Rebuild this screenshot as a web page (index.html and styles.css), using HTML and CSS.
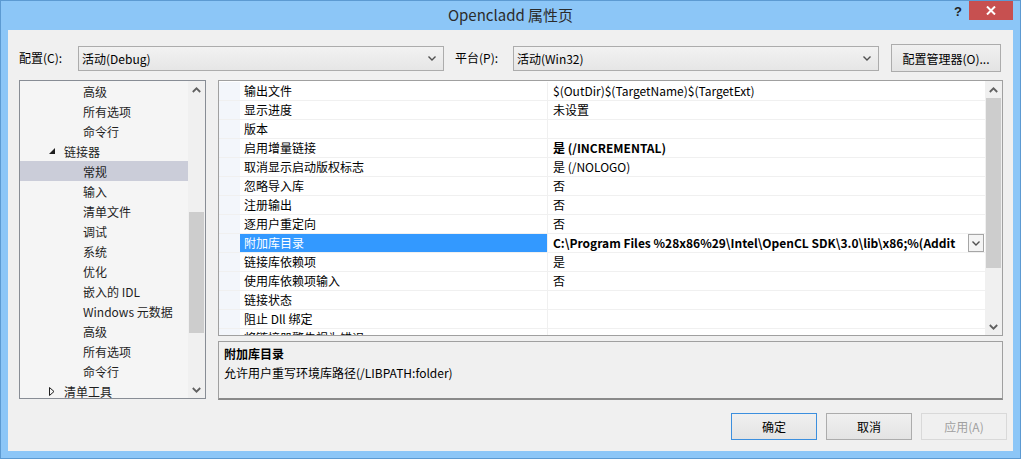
FILE: index.html
```html
<!doctype html>
<html lang="zh-CN">
  <head>
    <meta charset="UTF-8">
    <title>Opencladd 属性页</title>
    <link rel="stylesheet" href="styles.css">
  </head>
  <body>
    <div class="window">
      <div class="titlebar">
        <span></span>
        <span class="title">Opencladd 属性页</span>
        <div class="caption">
          <span class="help">?</span>
          <span class="close">
            <svg width="10" height="9" viewBox="0 0 10 9"><path d="M1 0.5L9 8.5M9 0.5L1 8.5" stroke="#fff" stroke-width="2"/></svg>
          </span>
        </div>
      </div>
      <div class="client">
        <div class="toolbar">
          <span class="lbl lbl-config">配置(C):</span>
          <div class="combo">
            <span>活动(Debug)</span>
            <svg width="8" height="5" viewBox="0 0 8 5"><path d="M0.5 0.5L4 4L7.5 0.5" fill="none" stroke="#505050" stroke-width="1.4"/></svg>
          </div>
          <span class="lbl lbl-platform">平台(P):</span>
          <div class="combo">
            <span>活动(Win32)</span>
            <svg width="8" height="5" viewBox="0 0 8 5"><path d="M0.5 0.5L4 4L7.5 0.5" fill="none" stroke="#505050" stroke-width="1.4"/></svg>
          </div>
          <button class="btn btn-manager">配置管理器(O)...</button>
        </div>

        <div class="main">
          <div class="tree">
            <ul class="tree-list">
              <li class="child">高级</li>
              <li class="child">所有选项</li>
              <li class="child">命令行</li>
              <li class="parent">
                <svg class="twisty" width="6" height="6" viewBox="0 0 6 6"><path d="M6 0L6 6L0 6Z" fill="#1e1e1e"/></svg>
                链接器
              </li>
              <li class="child selected">常规</li>
              <li class="child">输入</li>
              <li class="child">清单文件</li>
              <li class="child">调试</li>
              <li class="child">系统</li>
              <li class="child">优化</li>
              <li class="child">嵌入的 IDL</li>
              <li class="child">Windows 元数据</li>
              <li class="child">高级</li>
              <li class="child">所有选项</li>
              <li class="child">命令行</li>
              <li class="parent">
                <svg class="twisty" width="6" height="9" viewBox="0 0 6 9"><path d="M0.5 0.5L5 4.5L0.5 8.5Z" fill="none" stroke="#1e1e1e"/></svg>
                清单工具
              </li>
            </ul>
            <div class="vscroll tree-scroll">
              <span class="arrow"><svg width="9" height="6" viewBox="0 0 9 6"><path d="M0.8 5L4.5 1.3L8.2 5" fill="none" stroke="#606060" stroke-width="1.8"/></svg></span>
              <div class="track"><div class="thumb"></div></div>
              <span class="arrow"><svg width="9" height="6" viewBox="0 0 9 6"><path d="M0.8 1L4.5 4.7L8.2 1" fill="none" stroke="#606060" stroke-width="1.8"/></svg></span>
            </div>
          </div>

          <div class="right">
            <div class="grid">
              <div class="grid-body">
                <div class="row"><span class="gutter"></span><span class="name">输出文件</span><span class="value">$(OutDir)$(TargetName)$(TargetExt)</span></div>
                <div class="row"><span class="gutter"></span><span class="name">显示进度</span><span class="value">未设置</span></div>
                <div class="row"><span class="gutter"></span><span class="name">版本</span><span class="value"></span></div>
                <div class="row"><span class="gutter"></span><span class="name">启用增量链接</span><span class="value bold">是 (/INCREMENTAL)</span></div>
                <div class="row"><span class="gutter"></span><span class="name">取消显示启动版权标志</span><span class="value">是 (/NOLOGO)</span></div>
                <div class="row"><span class="gutter"></span><span class="name">忽略导入库</span><span class="value">否</span></div>
                <div class="row"><span class="gutter"></span><span class="name">注册输出</span><span class="value">否</span></div>
                <div class="row"><span class="gutter"></span><span class="name">逐用户重定向</span><span class="value">否</span></div>
                <div class="row active">
                  <span class="gutter"></span><span class="name">附加库目录</span>
                  <span class="value bold">
                    <span class="clip">C:\Program Files %28x86%29\Intel\OpenCL SDK\3.0\lib\x86;%(Addit</span>
                    <span class="drop"><svg width="8" height="5" viewBox="0 0 8 5"><path d="M0.5 0.5L4 4L7.5 0.5" fill="none" stroke="#505050" stroke-width="1.4"/></svg></span>
                  </span>
                </div>
                <div class="row"><span class="gutter"></span><span class="name">链接库依赖项</span><span class="value">是</span></div>
                <div class="row"><span class="gutter"></span><span class="name">使用库依赖项输入</span><span class="value">否</span></div>
                <div class="row"><span class="gutter"></span><span class="name">链接状态</span><span class="value"></span></div>
                <div class="row"><span class="gutter"></span><span class="name">阻止 Dll 绑定</span><span class="value"></span></div>
                <div class="row"><span class="gutter"></span><span class="name">将链接器警告视为错误</span><span class="value"></span></div>
              </div>
              <div class="vscroll grid-scroll">
                <span class="arrow"><svg width="9" height="6" viewBox="0 0 9 6"><path d="M0.8 5L4.5 1.3L8.2 5" fill="none" stroke="#606060" stroke-width="1.8"/></svg></span>
                <div class="track"><div class="thumb"></div></div>
                <span class="arrow"><svg width="9" height="6" viewBox="0 0 9 6"><path d="M0.8 1L4.5 4.7L8.2 1" fill="none" stroke="#606060" stroke-width="1.8"/></svg></span>
              </div>
            </div>
            <div class="desc">
              <div class="desc-title">附加库目录</div>
              <div class="desc-text">允许用户重写环境库路径(/LIBPATH:folder)</div>
            </div>
          </div>
        </div>

        <div class="footer">
          <button class="btn btn-ok">确定</button>
          <button class="btn">取消</button>
          <button class="btn btn-disabled">应用(A)</button>
        </div>
      </div>
    </div>
  </body>
</html>
```

FILE: styles.css
```css
html, body {
  margin: 0;
  padding: 0;
}
body {
  background-color: #8cc6f7;
  color: #000;
  font-family: "Noto Sans CJK SC", "Noto Sans", sans-serif;
  font-size: 12px
}
.window {
  background-color: #8cc6f7;
  border: 1px solid #5c9ad2;
  box-sizing: border-box;
  display: flex;
  flex-direction: column;
  height: 459px;
  padding: 0 7px 7px;
  width: 1021px
}
.titlebar {
  align-items: start;
  display: grid;
  grid-template-columns: 1fr auto 1fr;
  height: 29px
}
.title {
  color: #2b2b2b;
  font-size: 15px;
  line-height: 28px
}
.caption {
  display: flex;
  justify-content: flex-end
}
.help {
  color: #222;
  font-family: "Liberation Sans", sans-serif;
  font-size: 13px;
  font-weight: bold;
  line-height: 19px;
  margin-right: 7px;
  padding-top: 1px
}
.close {
  align-items: center;
  background-color: #c75050;
  display: flex;
  height: 19px;
  justify-content: center;
  width: 44px
}
.client {
  background-color: #f0f0f0;
  display: flex;
  flex: 1;
  flex-direction: column;
  padding: 14px 6px 0 11px
}

/* top row */
.toolbar {
  align-items: center;
  display: flex;
  height: 28px
}
.lbl {
  line-height: 24px
}
.lbl-config {
  width: 59px
}
.lbl-platform {
  margin-left: 11px;
  width: 58px
}
.combo {
  align-items: center;
  background: linear-gradient(#f2f2f2, #e6e6e6);
  border: 1px solid #acacac;
  box-sizing: border-box;
  display: flex;
  height: 25px;
  justify-content: space-between;
  padding: 0 7px 0 3px;
  width: 366px
}
.btn {
  background: linear-gradient(#f0f0f0, #e3e3e3);
  border: 1px solid #acacac;
  color: #000;
  font: 12px "Noto Sans CJK SC", "Noto Sans", sans-serif;
  height: 27px;
  padding: 0;
  width: 86px
}
.btn-manager {
  height: 28px;
  margin-left: 12px;
  width: 110px
}
.btn-ok {
  border-color: #3c8fde
}
.btn-disabled {
  background: #f0f0f0;
  border-color: #d9d9d9;
  color: #a0a0a0
}

/* main area */
.main {
  display: flex;
  gap: 12px;
  height: 320px;
  margin-top: 8px
}
.tree {
  background-color: #f5f5f5;
  border: 1px solid #888d95;
  box-sizing: border-box;
  display: flex;
  height: 319px;
  overflow: hidden;
  width: 187px
}
.tree-list {
  flex: 1;
  list-style: none;
  margin: 0;
  min-width: 0;
  padding: 0
}
.tree-list li {
  align-items: center;
  color: #1e1e1e;
  display: flex;
  height: 20px;
  white-space: nowrap
}
.tree-list .child {
  padding-left: 63px
}
.tree-list .parent {
  padding-left: 29px
}
.tree-list .twisty {
  margin-right: 9px
}
.tree-list .selected {
  background-color: #cbcdd9
}
.vscroll {
  display: flex;
  flex-direction: column;
  flex-shrink: 0;
  width: 17px
}
.vscroll .arrow {
  align-items: center;
  display: flex;
  height: 17px;
  justify-content: center
}
.vscroll .track {
  flex: 1
}
.tree-scroll {
  background-color: #f0f0f0
}
.tree-scroll .thumb {
  background-color: #cdcdcd;
  height: 121px;
  margin: 114px 1px 0
}
.right {
  display: flex;
  flex-direction: column;
  gap: 5px;
  width: 785px
}
.grid {
  background-color: #fff;
  border: 1px solid #a0a0a0;
  box-sizing: border-box;
  display: flex;
  height: 257px;
  overflow: hidden
}
.grid-body {
  flex: 1;
  min-width: 0;
  padding-top: 1px
}
.row {
  border-bottom: 1px solid #f0f0f0;
  display: flex;
  height: 18px
}
.gutter {
  background-color: #f3f6fb;
  flex-shrink: 0;
  width: 21px
}
.name {
  border-right: 1px solid #f0f0f0;
  flex-shrink: 0;
  line-height: 18px;
  padding-left: 4px;
  white-space: nowrap;
  width: 303px
}
.value {
  flex: 1;
  line-height: 18px;
  min-width: 0;
  overflow: hidden;
  padding-left: 5px;
  white-space: nowrap
}
.bold {
  font-weight: bold
}
.row.active .name {
  background-color: #3399ff;
  color: #fff
}
.row.active .value {
  align-items: center;
  display: flex
}
.clip {
  flex: 1;
  min-width: 0;
  overflow: hidden
}
.drop {
  align-items: center;
  background-color: #f4f4f4;
  border: 1px solid #a6a6a6;
  box-sizing: border-box;
  display: flex;
  flex-shrink: 0;
  height: 18px;
  justify-content: center;
  margin-right: 1px;
  width: 16px
}
.grid-scroll {
  background-color: #f0f0f0
}
.grid-scroll .thumb {
  background-color: #cdcdcd;
  height: 170px;
  margin: 0 1px
}
.desc {
  background-color: #f0f0f0;
  border: 1px solid #a0a0a0;
  border-bottom: 2px solid #8a8a8a;
  box-sizing: border-box;
  height: 59px;
  padding: 2px 5px
}
.desc-title {
  font-weight: bold;
  line-height: 19px
}
.desc-text {
  line-height: 19px
}

/* bottom buttons */
.footer {
  display: flex;
  gap: 9px;
  justify-content: flex-end;
  margin-top: 13px
}
```
